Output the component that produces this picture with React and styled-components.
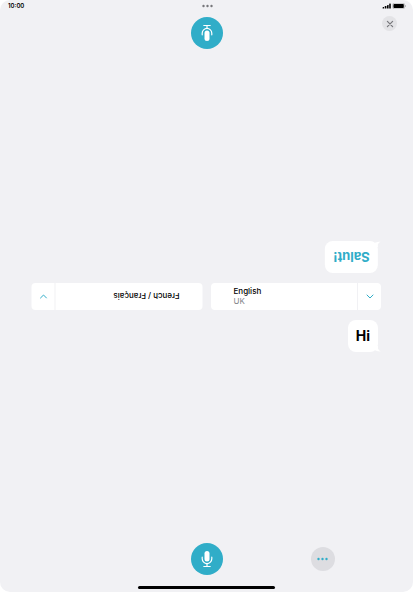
import React from "react";
import styled, { createGlobalStyle } from "styled-components";

const COLORS = {
    page: "#f1f1f4",
    white: "#ffffff",
    teal: "#30adc8",
    grey: "#dddde1",
    closeBg: "#e3e3e6",
    closeIcon: "#77777b",
    muted: "#85858a",
    black: "#000000",
};

const MicIcon = () => (
    <svg width="12" height="18" viewBox="0 0 12 18" fill="none" stroke="#fff" strokeLinecap="round">
        <rect x="3.5" y="1" width="5" height="10.4" rx="2.5" fill="#fff" stroke="none" />
        <path d="M1.2 7.2V8.8a4.8 4.8 0 0 0 9.6 0V7.2" strokeWidth="1.2" />
        <path d="M6 13.8v2.4M2.8 16.5h6.4" strokeWidth="1.2" />
    </svg>
);

const ChevronIcon = () => (
    <svg width="8" height="5" viewBox="0 0 8 5" fill="none" stroke={COLORS.teal} strokeLinecap="round" strokeLinejoin="round">
        <path d="M1 1l3 3 3-3" strokeWidth="1" />
    </svg>
);

const DotsIcon = ({ color, width }) => (
    <svg width={width} height="4" viewBox={`0 0 ${width} 4`} fill={color}>
        <circle cx="1.5" cy="2" r="1.2" />
        <circle cx={width / 2} cy="2" r="1.2" />
        <circle cx={width - 1.5} cy="2" r="1.2" />
    </svg>
);

const CloseIcon = () => (
    <svg width="8" height="8" viewBox="0 0 8 8" stroke={COLORS.closeIcon} strokeLinecap="round">
        <path d="M1.4 1.4l5.2 5.2M6.6 1.4L1.4 6.6" strokeWidth="1.2" />
    </svg>
);

const StatusIcons = () => (
    <svg width="24" height="6" viewBox="0 0 24 6" fill="#000">
        <rect x="0.6" y="4" width="1.6" height="1.6" rx="0.4" />
        <rect x="2.8" y="3" width="1.6" height="2.6" rx="0.4" />
        <rect x="5" y="2" width="1.6" height="3.6" rx="0.4" />
        <rect x="7.2" y="0.6" width="1.6" height="5" rx="0.4" />
        <rect x="10.6" y="0.3" width="12" height="5.4" rx="1.4" fill="none" stroke="#999" strokeWidth="0.5" />
        <rect x="11.4" y="1" width="10.4" height="4" rx="0.8" />
        <rect x="23.1" y="2.1" width="0.7" height="1.8" rx="0.3" fill="#999" />
    </svg>
);

const BubbleTail = () => (
    <Tail width="6" height="6" viewBox="0 0 6 6" fill="#fff" aria-hidden="true">
        <path d="M3 0v2.5q0.6 1.8 2.8 3.1Q2.6 5.4 0 4.2V0z" />
    </Tail>
);

const App = () => {
    return (
        <>
            <GlobalStyle />
            <Screen>
                <StatusBar>
                    <Time>10:00</Time>
                    <DotsIcon color="#77777a" width={11} />
                    <StatusRight>
                        <StatusIcons />
                    </StatusRight>
                </StatusBar>

                <Header>
                    <MicButton $flipped aria-label="Parler">
                        <MicIcon />
                    </MicButton>
                    <CloseButton aria-label="Close">
                        <CloseIcon />
                    </CloseButton>
                </Header>

                <Conversation>
                    <PartnerSide>
                        <Bubble $flipped>
                            Salut!
                            <BubbleTail />
                        </Bubble>
                    </PartnerSide>

                    <Languages>
                        <Selector $flipped>
                            <LanguageText>
                                <Language>French / Français</Language>
                            </LanguageText>
                            <Arrow>
                                <ChevronIcon />
                            </Arrow>
                        </Selector>
                        <Selector>
                            <LanguageText>
                                <Language>English</Language>
                                <Region>UK</Region>
                            </LanguageText>
                            <Arrow>
                                <ChevronIcon />
                            </Arrow>
                        </Selector>
                    </Languages>

                    <OwnSide>
                        <Bubble>
                            Hi
                            <BubbleTail />
                        </Bubble>
                    </OwnSide>
                </Conversation>

                <Footer>
                    <MicButton aria-label="Speak">
                        <MicIcon />
                    </MicButton>
                    <MoreButton aria-label="More">
                        <DotsIcon color={COLORS.teal} width={11} />
                    </MoreButton>
                </Footer>
                <HomeBar />
            </Screen>
        </>
    );
};

const GlobalStyle = createGlobalStyle`
    * {
        box-sizing: border-box;
    }
    body {
        margin: 0;
        background-color: ${COLORS.white};
        font-family: Inter, "Liberation Sans", sans-serif;
    }
    button {
        font-family: inherit;
        border: none;
        padding: 0;
        cursor: pointer;
    }
    svg {
        display: block;
    }
`;

const Screen = styled.div`
    min-height: 100vh;
    display: flex;
    flex-direction: column;
    background-color: ${COLORS.page};
    border-radius: 10px;
`;

const StatusBar = styled.div`
    height: 12px;
    padding: 0 7px 0 8px;
    display: grid;
    grid-template-columns: 1fr auto 1fr;
    align-items: center;
`;

const Time = styled.span`
    font-size: 6px;
    line-height: 12px;
    font-weight: 600;
`;

const StatusRight = styled.div`
    justify-self: end;
`;

const Header = styled.header`
    display: grid;
    grid-template-columns: 1fr auto 1fr;
    padding: 4px 16px 0;
`;

const RoundButton = styled.button`
    display: flex;
    align-items: center;
    justify-content: center;
    border-radius: 50%;
`;

const MicButton = styled(RoundButton)`
    grid-column: 2;
    width: 32px;
    height: 32px;
    background-color: ${COLORS.teal};
    transform: ${({ $flipped }) => ($flipped ? "rotate(180deg)" : "none")};

    ${Header} & {
        margin-top: 1px;
    }
`;

const CloseButton = styled(RoundButton)`
    justify-self: end;
    width: 15px;
    height: 15px;
    background-color: ${COLORS.closeBg};
`;

const MoreButton = styled(RoundButton)`
    justify-self: center;
    width: 24px;
    height: 24px;
    background-color: ${COLORS.grey};
`;

const Conversation = styled.main`
    flex: 1;
    display: flex;
    flex-direction: column;
    gap: 10px;
    padding: 0 32px;
`;

const PartnerSide = styled.section`
    flex: 1;
    display: flex;
    align-items: flex-end;
    justify-content: flex-end;
    padding-right: 3px;
`;

const OwnSide = styled(PartnerSide)`
    align-items: flex-start;
`;

const Bubble = styled.div`
    position: relative;
    padding: 6px 8px;
    border-radius: 8px;
    background-color: ${COLORS.white};
    color: ${({ $flipped }) => ($flipped ? COLORS.teal : COLORS.black)};
    font-size: ${({ $flipped }) => ($flipped ? "13px" : "14px")};
    line-height: 20px;
    font-weight: 700;
    transform: ${({ $flipped }) => ($flipped ? "rotate(180deg)" : "none")};

    svg {
        ${({ $flipped }) => ($flipped ? "left: -3px; transform: scaleX(-1);" : "right: -3px;")}
    }
`;

const Tail = styled.svg`
    position: absolute;
    bottom: 0;
`;

const Languages = styled.div`
    display: flex;
    gap: 8px;
`;

const Selector = styled.button`
    flex: 1;
    height: 27px;
    display: flex;
    align-items: stretch;
    border-radius: 4px;
    background-color: ${COLORS.white};
    text-align: left;
    transform: ${({ $flipped }) => ($flipped ? "rotate(180deg)" : "none")};
`;

const LanguageText = styled.span`
    flex: 1;
    display: flex;
    flex-direction: column;
    justify-content: center;
    padding-left: 23px;
`;

const Language = styled.span`
    font-size: 8px;
    line-height: 10px;
    font-weight: 500;
    color: ${COLORS.black};
`;

const Region = styled(Language)`
    font-weight: 400;
    color: ${COLORS.muted};
`;

const Arrow = styled.span`
    width: 24px;
    display: flex;
    align-items: center;
    justify-content: center;
    border-left: 1px solid ${COLORS.page};
`;

const Footer = styled.footer`
    display: grid;
    grid-template-columns: 1fr auto 1fr;
    column-gap: 32px;
    align-items: center;
    padding: 0 22px 11px;
`;

const HomeBar = styled.div`
    align-self: center;
    width: 33%;
    height: 3px;
    margin-bottom: 3px;
    border-radius: 2px;
    background-color: ${COLORS.black};
`;

export default App;
